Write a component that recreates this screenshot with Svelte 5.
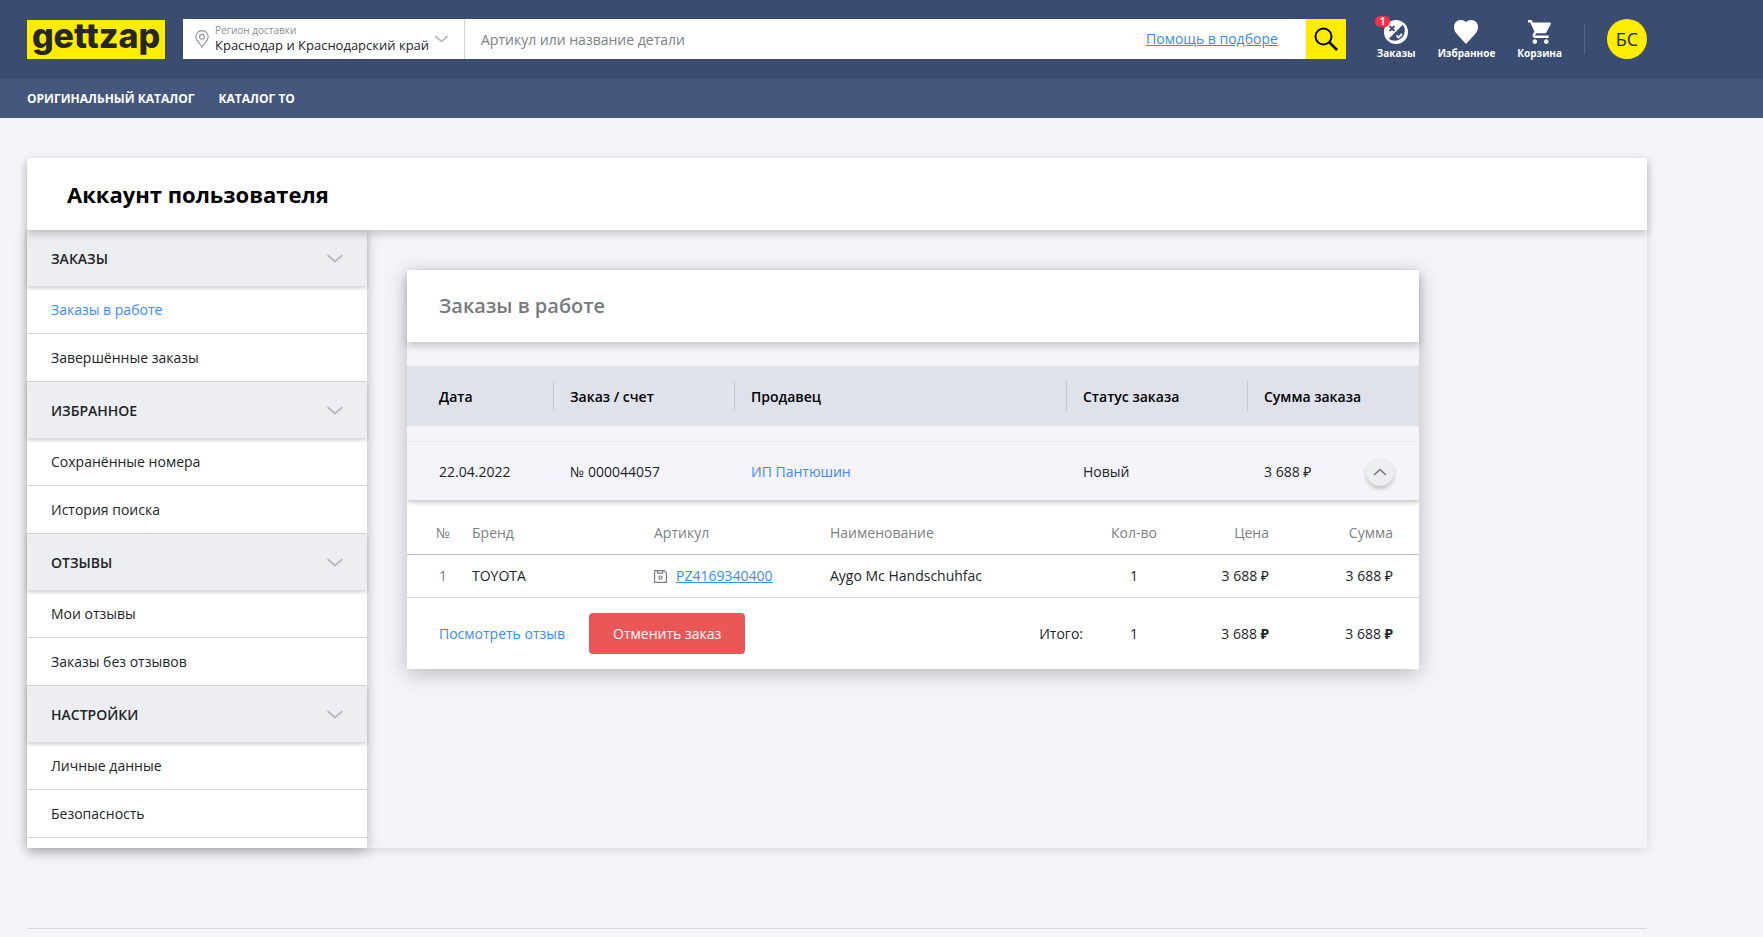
<script lang="ts">
  let region = $state('Краснодар и Краснодарский край');
  let query = $state('');
  let opened = $state(true);

  const menu = [
    { title: 'Заказы', items: ['Заказы в работе', 'Завершённые заказы'] },
    { title: 'Избранное', items: ['Сохранённые номера', 'История поиска'] },
    { title: 'Отзывы', items: ['Мои отзывы', 'Заказы без отзывов'] },
    { title: 'Настройки', items: ['Личные данные', 'Безопасность'] }
  ];
  const active = 'Заказы в работе';

  const columns = ['Дата', 'Заказ / счет', 'Продавец', 'Статус заказа', 'Сумма заказа'];

  const parts = [
    { brand: 'TOYOTA', article: 'PZ4169340400', name: 'Aygo Mc Handschuhfac', count: 1, price: '3 688', sum: '3 688' }
  ];
</script>

<header class="header">
  <div class="container header-top">
    <a class="logo" href="#home">gettzap</a>

    <form class="search" onsubmit={(e) => e.preventDefault()}>
      <div class="region">
        <svg class="pin" viewBox="0 0 14 18" width="14" height="18" fill="none" stroke="#8d929e" stroke-width="1.1">
          <path d="M7 17C5.2 13.8 .8 10.800 .8 6.800a6.200 6.200 0 0 1 12.400 0C13.200 10.800 8.800 13.800 7 17z" />
          <circle cx="7" cy="6.800" r="2.400" />
        </svg>
        <div class="region-field">
          <label for="region">Регион доставки</label>
          <select id="region" bind:value={region}>
            <option>Краснодар и Краснодарский край</option>
          </select>
        </div>
        <svg class="arrow" viewBox="0 0 16 9" width="13" height="8" fill="none" stroke="#b4b8c2" stroke-width="2">
          <path d="M.5 1 8 7.500 15.500 1" />
        </svg>
      </div>
      <input type="text" aria-label="Поиск" placeholder="Артикул или название детали" bind:value={query} />
      <a class="help" href="#help">Помощь в подборе</a>
      <button class="find" aria-label="Найти">
        <svg viewBox="0 0 24 24" width="24" height="24" fill="none" stroke="#000" stroke-width="2">
          <circle cx="9.500" cy="9.500" r="8" />
          <path d="M15.200 15.200 23 23" stroke-width="2.600" />
        </svg>
      </button>
    </form>

    <nav class="actions">
      <a href="#orders">
        <span class="icon">
          <svg viewBox="0 0 24 24" width="24" height="24">
            <circle cx="12" cy="12" r="12" fill="#fff" />
            <path d="M18.800 4.800A10 10 0 0 1 4.800 18.800z" fill="#3b4c73" />
            <path d="M5.500 6 10.500 11M10.500 6 5.500 11" stroke="#3b4c73" stroke-width="1.800" />
            <path d="M12.500 15.500 14.500 17.500 18 14" fill="none" stroke="#fff" stroke-width="1.800" />
          </svg>
          <span class="badge">1</span>
        </span>
        Заказы
      </a>
      <a href="#favorites">
        <span class="icon">
          <svg viewBox="0 0 24 24" width="24" height="24" fill="#fff">
            <path d="M12 24 3.500 14.800C1 12 0 9.800 0 7 0 3 2.800 0 6.500 0 8.800 0 10.800 .8 12 2.300 13.200 .8 15.200 0 17.500 0 21.200 0 24 3 24 7c0 2.800-1 5-3.500 7.800z" />
          </svg>
        </span>
        Избранное
      </a>
      <a href="#cart">
        <span class="icon">
          <svg viewBox="1 2 21 20" width="24" height="24" fill="#fff" preserveAspectRatio="none">
            <path d="M7 18c-1.100 0-1.990.9-1.990 2S5.900 22 7 22s2-.9 2-2-.9-2-2-2zM1 2v2h2l3.600 7.590-1.350 2.450c-.16.28-.25.61-.25.960 0 1.100.9 2 2 2h12v-2H7.420c-.14 0-.25-.11-.25-.25l.03-.12.9-1.630h7.450c.75 0 1.410-.41 1.750-1.030l3.580-6.490A1 1 0 0 0 20 4H5.210l-.94-2H1zm16 16c-1.100 0-1.990.9-1.990 2s.89 2 1.990 2 2-.9 2-2-.9-2-2-2z" />
          </svg>
        </span>
        Корзина
      </a>
      <span class="separator"></span>
      <button class="avatar">БС</button>
    </nav>
  </div>
</header>

<nav class="subnav">
  <div class="container subnav-links">
    <a href="#original">Оригинальный каталог</a>
    <a href="#to">Каталог ТО</a>
  </div>
</nav>

<main class="container">
  <section class="account">
    <h1>Аккаунт пользователя</h1>

    <div class="account-body">
      <aside class="sidebar">
        {#each menu as group}
          <button class="group">
            {group.title}
            <svg viewBox="0 0 16 9" width="16" height="9" fill="none" stroke="#b9bcc6" stroke-width="2">
              <path d="M.5 1 8 7.500 15.500 1" />
            </svg>
          </button>
          {#each group.items as item}
            <a class="item" class:active={item === active} href="#menu">{item}</a>
          {/each}
        {/each}
      </aside>

      <div class="content">
        <div class="orders">
          <h2>Заказы в работе</h2>

          <table class="orders-table">
            <thead>
              <tr>
                {#each columns as column}
                  <th>{column}</th>
                {/each}
              </tr>
            </thead>
            <tbody>
              <tr>
                <td>22.04.2022</td>
                <td>№ 000044057</td>
                <td><a href="#seller">ИП Пантюшин</a></td>
                <td>Новый</td>
                <td class="total">
                  3 688 ₽
                  <button class="toggle" aria-label="Свернуть" onclick={() => (opened = !opened)}>
                    <svg viewBox="0 0 14 8" width="14" height="8" fill="none" stroke="#71747c" stroke-width="1.600">
                      <path d="M1 7 7 1.500 13 7" />
                    </svg>
                  </button>
                </td>
              </tr>
            </tbody>
          </table>

          {#if opened}
            <table class="parts">
              <colgroup>
                <col class="c-num" />
                <col class="c-brand" />
                <col class="c-article" />
                <col />
                <col class="c-count" />
                <col class="c-price" />
                <col class="c-sum" />
              </colgroup>
              <thead>
                <tr>
                  <th class="num">№</th>
                  <th>Бренд</th>
                  <th>Артикул</th>
                  <th>Наименование</th>
                  <th class="count">Кол-во</th>
                  <th class="price">Цена</th>
                  <th class="price sum">Сумма</th>
                </tr>
              </thead>
              <tbody>
                {#each parts as part, i}
                  <tr>
                    <td class="num">{i + 1}</td>
                    <td>{part.brand}</td>
                    <td>
                      <span class="article">
                        <svg viewBox="0 0 13 13" width="13" height="13" fill="none" stroke="#7c8088" stroke-width="1.200">
                          <path d="M.6 .6H10L12.400 3V12.400H.6zM3.500 .6V3.200H8.800V.6" />
                          <circle cx="6.500" cy="7.600" r="1.600" />
                        </svg>
                        <a href="#article">{part.article}</a>
                      </span>
                    </td>
                    <td>{part.name}</td>
                    <td class="count">{part.count}</td>
                    <td class="price">{part.price} ₽</td>
                    <td class="price sum">{part.sum} ₽</td>
                  </tr>
                {/each}
              </tbody>
              <tfoot>
                <tr>
                  <td colspan="4">
                    <div class="summary">
                      <a href="#review">Посмотреть отзыв</a>
                      <button class="cancel">Отменить заказ</button>
                      <span class="summary-label">Итого:</span>
                    </div>
                  </td>
                  <td class="count">1</td>
                  <td class="price">3 688 <b>₽</b></td>
                  <td class="price sum">3 688 <b>₽</b></td>
                </tr>
              </tfoot>
            </table>
          {/if}
        </div>
      </div>
    </div>
  </section>

  <hr />
</main>

<style>
  :global(body) {
    background: #f5f4fa;
    color: #212529;
    font-family: 'Open Sans', 'Noto Sans', sans-serif;
    font-size: 14px;
    line-height: 20px;
  }

  a {
    color: #3a8bfd;
    text-decoration: none;
  }

  button,
  select,
  input {
    font-family: inherit;
    border: 0;
    margin: 0;
    padding: 0;
    border-radius: 0;
  }

  button {
    cursor: pointer;
  }

  svg {
    display: block;
    flex: none;
  }

  .container {
    box-sizing: border-box;
    max-width: 1674px;
    padding: 0 27px;
  }

  /* header */
  .header {
    background: #3b4c73;
    border-bottom: 1px solid #394a70;
  }

  .header-top {
    display: flex;
    align-items: center;
    height: 78px;
  }

  .logo {
    box-sizing: border-box;
    width: 138px;
    height: 39px;
    margin-right: 18px;
    background: #ffed00;
    color: #262626;
    font-family: Inter, 'Open Sans', sans-serif;
    font-size: 34px;
    font-weight: 800;
    line-height: 32px;
    text-align: center;
  }

  .search {
    flex: 1;
    display: flex;
    align-items: center;
    height: 40px;
    background: #fff;
  }

  .region {
    box-sizing: border-box;
    display: flex;
    align-items: center;
    width: 282px;
    height: 40px;
    padding: 0 16px 0 12px;
    border-right: 1px solid #d5d6da;
  }

  .region-field {
    flex: 1;
    display: flex;
    flex-direction: column;
    margin-left: 6px;
  }

  .region-field label {
    color: #8b8d92;
    font-size: 10px;
    line-height: 12px;
  }

  .region-field select {
    appearance: none;
    width: 100%;
    height: 18px;
    background: none;
    color: #212529;
    font-size: 13px;
    line-height: 18px;
  }

  .search input {
    flex: 1;
    min-width: 0;
    height: 40px;
    padding: 0 16px;
    font-size: 14px;
  }

  .search input::placeholder {
    color: #7c7f85;
  }

  .help {
    margin-right: 28px;
    text-decoration: underline;
  }

  .find {
    display: flex;
    align-items: center;
    justify-content: center;
    width: 40px;
    height: 40px;
    background: #ffed00;
  }

  .actions {
    display: flex;
    align-items: center;
    gap: 22px;
    margin-left: 31px;
  }

  .actions a {
    display: flex;
    flex-direction: column;
    align-items: center;
    padding-top: 2px;
    color: #fff;
    font-size: 10px;
    font-weight: 700;
    line-height: 14px;
  }

  .icon {
    position: relative;
    margin-bottom: 2px;
  }

  .badge {
    position: absolute;
    top: -4px;
    left: -9px;
    width: 15px;
    height: 11px;
    border-radius: 6px;
    background: #ff2c45;
    line-height: 11px;
    text-align: center;
  }

  .separator {
    width: 1px;
    height: 30px;
    background: #56658a;
  }

  .avatar {
    width: 40px;
    height: 40px;
    border-radius: 50%;
    background: #ffed00;
    color: #212529;
    font-size: 18px;
  }

  .subnav {
    background: #46577d;
  }

  .subnav-links {
    display: flex;
    align-items: center;
    gap: 24px;
    height: 39px;
  }

  .subnav a {
    color: #fff;
    font-size: 12px;
    font-weight: 700;
    text-transform: uppercase;
  }

  /* account */
  .account {
    margin-top: 40px;
    box-shadow: 0 2px 10px rgba(0, 0, 0, 0.12);
  }

  h1,
  h2 {
    position: relative;
    margin: 0;
    background: #fff;
    line-height: 72px;
    box-shadow: 0 4px 8px rgba(0, 0, 0, 0.2);
  }

  h1 {
    z-index: 2;
    padding: 0 40px;
    color: #000;
    font-size: 22px;
    font-weight: 700;
  }

  .account-body {
    display: flex;
  }

  .sidebar {
    flex: none;
    width: 340px;
    padding-bottom: 10px;
    background: #fff;
    box-shadow: 0 4px 12px rgba(0, 0, 0, 0.25);
  }

  .group {
    position: relative;
    display: flex;
    align-items: center;
    justify-content: space-between;
    width: 100%;
    height: 56px;
    padding: 0 24px;
    background: #edeef2;
    color: #212529;
    font-size: 14px;
    font-weight: 600;
    text-transform: uppercase;
    box-shadow: 0 2px 4px rgba(0, 0, 0, 0.2);
  }

  .item {
    position: relative;
    display: block;
    padding: 0 24px;
    border-bottom: 1px solid #d8d9dd;
    color: #212529;
    line-height: 47px;
  }

  .item.active {
    color: #3a8bfd;
  }

  .content {
    flex: 1;
    min-width: 0;
    padding: 40px;
  }

  .orders {
    max-width: 1012px;
    background: #f5f4fa;
    box-shadow: 0 4px 20px rgba(0, 0, 0, 0.25);
  }

  h2 {
    margin-bottom: 24px;
    padding: 0 32px;
    color: #777a80;
    font-size: 20px;
    font-weight: 600;
  }

  /* order list */
  .orders-table,
  .orders-table thead,
  .orders-table tbody {
    display: block;
  }

  .orders-table tr {
    display: grid;
    grid-template-columns: 146px 181px 332px 181px 1fr;
    align-items: center;
  }

  .orders-table thead tr {
    height: 60px;
    margin-bottom: 16px;
    background: #dfe2eb;
  }

  .orders-table tbody tr {
    position: relative;
    height: 58px;
    box-shadow: 0 2px 5px rgba(0, 0, 0, 0.25);
    clip-path: inset(-1px 0 -8px 0);
  }

  .orders-table th,
  .orders-table td {
    padding: 2px 0 0 16px;
    border-left: 1px solid transparent;
    text-align: left;
    line-height: 28px;
  }

  .orders-table th {
    border-color: #c4c8d6;
    color: #000;
    font-weight: 600;
  }

  .orders-table th:first-child,
  .orders-table td:first-child {
    padding-left: 31px;
    border-color: transparent;
  }

  .orders-table .total {
    display: flex;
    align-items: center;
    justify-content: space-between;
    padding-right: 25px;
  }

  .toggle {
    display: flex;
    align-items: center;
    justify-content: center;
    width: 28px;
    height: 28px;
    border-radius: 50%;
    background: #edeef2;
    box-shadow: 0 3px 4px rgba(0, 0, 0, 0.2);
  }

  /* order details */
  .parts {
    width: 100%;
    table-layout: fixed;
    border-collapse: collapse;
    background: #fff;
  }

  .c-num {
    width: 65px;
  }

  .c-brand {
    width: 182px;
  }

  .c-article {
    width: 176px;
  }

  .c-count {
    width: 102px;
  }

  .c-price {
    width: 84px;
  }

  .c-sum {
    width: 150px;
  }

  .parts th,
  .parts td {
    padding: 0;
    text-align: left;
  }

  .parts th {
    height: 43px;
    padding-top: 11px;
    border-bottom: 1px solid #b9bac4;
    color: #7c7f85;
    font-weight: 400;
  }

  .parts tbody td {
    height: 42px;
    border-bottom: 1px solid #d8d9dd;
  }

  .parts tfoot td {
    height: 71px;
    font-weight: 500;
  }

  .parts .num {
    padding-right: 22px;
    padding-left: 29px;
    color: #7c7f85;
    text-align: center;
  }

  .parts .count {
    text-align: center;
  }

  .parts .price {
    text-align: right;
  }

  .parts .sum {
    padding-right: 26px;
  }

  .article {
    display: flex;
    align-items: center;
    gap: 9px;
  }

  .article a {
    text-decoration: underline;
  }

  .summary {
    display: flex;
    align-items: center;
    gap: 24px;
    padding-left: 32px;
  }

  .summary a {
    font-weight: 400;
  }

  .cancel {
    height: 41px;
    padding: 0 24px;
    border-radius: 4px;
    background: #eb5757;
    color: #fff;
    font-size: 14px;
    font-weight: 500;
  }

  .summary-label {
    margin-left: auto;
  }

  hr {
    margin: 80px 0 8px;
    border: 0;
    border-top: 1px solid #d8d9dd;
  }
</style>
